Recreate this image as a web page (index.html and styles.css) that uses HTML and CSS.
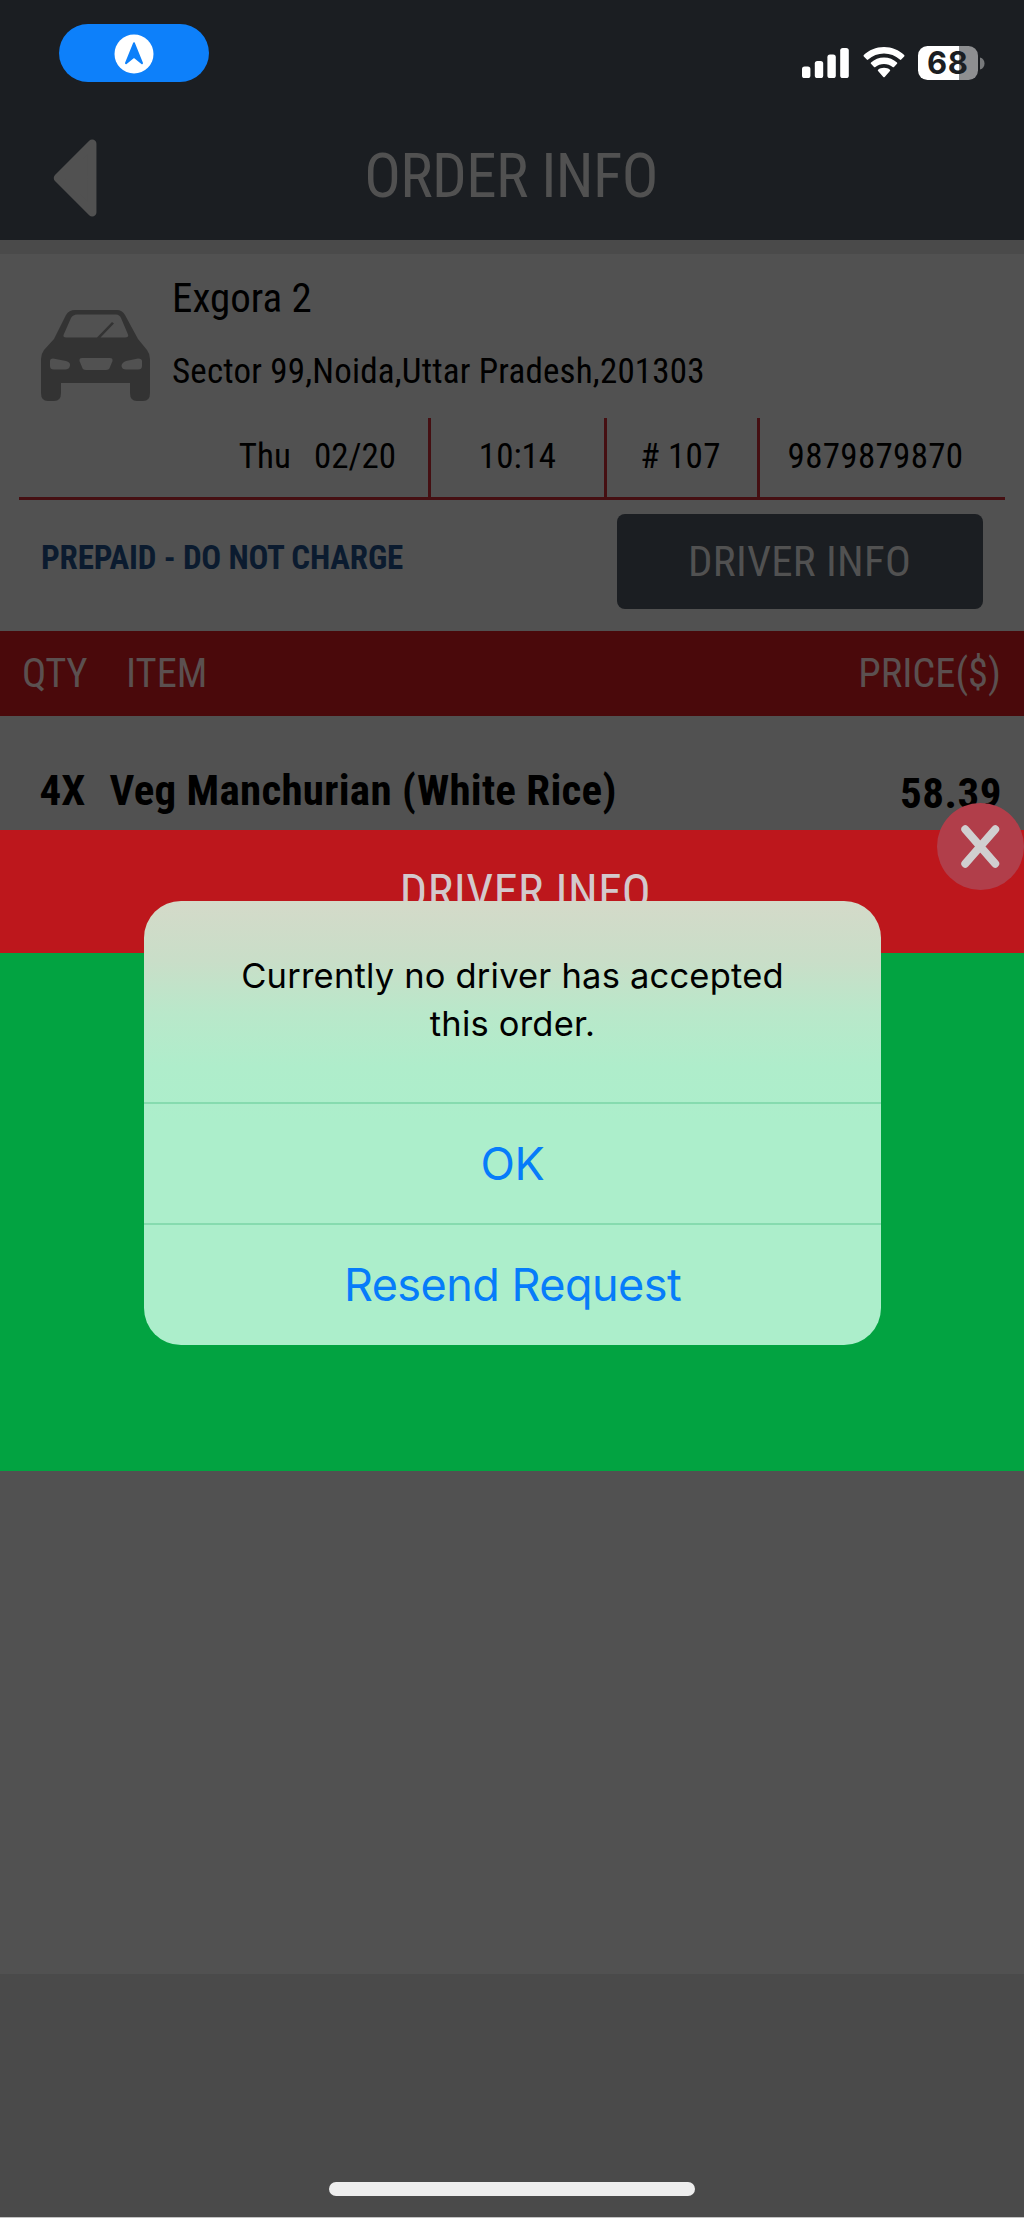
FILE: index.html
```html
<!DOCTYPE html>
<html lang="en">
<head>
<meta charset="utf-8">
<title>Order Info</title>
<link rel="stylesheet" href="styles.css">
</head>
<body>
<div class="screen">
  <header class="header">
    <div class="status">
      <div class="status-pill">
        <svg width="40" height="40" viewBox="0 0 40 40"><circle cx="20" cy="20" r="19.5" fill="#fff"/><path d="M20 9.3 28 29.2 20 22.8 12 29.2Z" fill="#0d80fa" stroke="#0d80fa" stroke-width="2" stroke-linejoin="round"/></svg>
      </div>
      <div class="status-icons">
        <svg width="48" height="30" viewBox="0 0 48 30" fill="#fff"><rect x="0" y="18.5" width="8.4" height="11.5" rx="2.6"/><rect x="12.8" y="13" width="8.4" height="17" rx="2.6"/><rect x="25.4" y="6.6" width="8.4" height="23.4" rx="2.6"/><rect x="38.2" y="0" width="8.6" height="30" rx="2.6"/></svg>
        <svg class="wifi" width="42" height="31" viewBox="0 0 42 31" fill="#fff"><path d="M21 0C29 0 36 3 41.200 8Q41.800 8.700 41.200 9.400L38.200 12.600Q37.500 13.200 36.800 12.600C32.500 8.700 27 6.600 21 6.600S9.500 8.700 5.200 12.600Q4.500 13.200 3.800 12.600L.8 9.400Q.2 8.700.8 8C6 3 13 0 21 0Z"/><path d="M21 10.400C26 10.400 30.500 12.300 34 15.400Q34.700 16.100 34 16.800L31 19.900Q30.300 20.500 29.600 19.900C27.200 17.900 24.300 16.900 21 16.900S14.800 17.900 12.400 19.900Q11.700 20.500 11 19.900L8 16.800Q7.300 16.100 8 15.400C11.500 12.300 16 10.400 21 10.400Z"/><path d="M21 20.800C23.500 20.800 25.300 21.500 26.900 22.700Q27.600 23.300 26.900 24L21.700 30Q21 30.700 20.300 30L15.100 24Q14.400 23.300 15.100 22.700C16.700 21.500 18.500 20.800 21 20.800Z"/></svg>
        <div class="battery"><span>68</span></div>
        <svg class="nub" width="5" height="13" viewBox="0 0 5 13"><path d="M0 0.500C3 1.300 4.500 3.500 4.500 6.500S3 11.700 0 12.500Z" fill="#77797b"/></svg>
      </div>
    </div>
    <div class="nav">
      <svg class="back" width="46" height="80" viewBox="0 0 46 80"><path d="M6 40 40.200 5.800V74.200Z" fill="#515151" stroke="#515151" stroke-width="8.500" stroke-linejoin="round"/></svg>
      <h1>ORDER INFO</h1>
    </div>
  </header>
  <section class="order">
    <div class="customer">
      <svg class="car" width="109" height="91" viewBox="0 0 109 91"><path fill="#333" fill-rule="evenodd" d="M34 0H76Q81 0 84 5L97 29 106 40Q109 44 109 49V83Q109 91 102 91H96Q89 91 89 83V73H20V83Q20 91 13 91H7Q0 91 0 83V49Q0 44 3 40L13 29 25 5Q28 0 34 0ZM36 4.500Q32 4.500 30 8L22.500 25Q22 27.500 25 27.500H56L71 12 73 13.500 59.500 27.500H84Q88 27.500 87 24.500L80 8Q78.500 4.500 75 4.500ZM12 48.500Q9 48.500 9 51V56Q9 59.500 13 59.500H24Q28.500 59.500 29 55.500 29.500 52 25 51ZM41 48H69Q72 48 71.500 51L69 57Q68.500 60 65 60H45Q41.500 60 41 57L38.500 51Q38 48 41 48ZM97 48.500Q101 48.500 101 51V56Q101 59.500 97 59.500H85Q81 59.500 80.500 56 80.500 53 85 51Z"/></svg>
      <div class="who">
        <p class="name">Exgora 2</p>
        <p class="address">Sector 99,Noida,Uttar Pradesh,201303</p>
      </div>
    </div>
    <div class="facts">
      <div class="fact fact-date"><span>Thu</span><span>02/20</span></div>
      <div class="fact fact-time">10:14</div>
      <div class="fact fact-number"># 107</div>
      <div class="fact fact-phone">9879879870</div>
    </div>
    <div class="payment">
      <p>PREPAID - DO NOT CHARGE</p>
      <button class="driver-button" type="button">DRIVER INFO</button>
    </div>
  </section>
  <div class="table-head"><span class="col-qty">QTY</span><span class="col-item">ITEM</span><span class="col-price">PRICE($)</span></div>
  <div class="item"><span class="item-qty">4X</span><span class="item-name">Veg Manchurian (White Rice)</span><span class="item-price">58.39</span></div>
  <footer class="footer"><div class="home-bar"></div></footer>

  <div class="sheet">
    <h2>DRIVER INFO</h2>
    <div class="sheet-body"></div>
    <button class="close" type="button" aria-label="Close"><svg width="87" height="87" viewBox="0 0 87 87"><path d="M28.300 26.300 58.200 60.700M58.200 26.300 28.300 60.700" stroke="#d0cfd0" stroke-width="8" stroke-linecap="round"/></svg></button>
  </div>
  <div class="alert" role="alertdialog">
    <p>Currently no driver has accepted<br>this order.</p>
    <button type="button" class="ok">OK</button>
    <button type="button" class="resend">Resend Request</button>
  </div>
</div>
</body>
</html>
```
FILE: styles.css
```css
* { box-sizing: border-box; margin: 0; padding: 0; }
body { background: #515151; }
button { border: 0; background: none; display: block; font: inherit; color: inherit; }
svg { display: block; flex: none; }

.screen {
  position: relative;
  display: flex;
  flex-direction: column;
  width: 1024px;
  height: 2218px;
  overflow: hidden;
  background: #515151;
  border-bottom: 1px solid #c4c4c4;
  font-family: "Roboto Condensed", Roboto, sans-serif;
  font-stretch: 75%;
  color: #000;
}

/* Header */
.header { height: 254px; background: #1b1e22; border-bottom: 14px solid #4a4a4a; flex: none; }
.status { display: flex; justify-content: space-between; height: 113px; padding: 24px 39px 0 59px; }
.status-pill { display: flex; justify-content: center; width: 150px; height: 58px; padding-top: 9.500px; border-radius: 29px; background: #0d80fa; }
.status-icons { display: flex; align-items: flex-start; padding-top: 24px; }
.wifi { margin: -1px 13px 0 12.500px; }
.battery {
  width: 60.500px; height: 34px; margin-top: -2px; border-radius: 9.500px;
  background: linear-gradient(90deg, #fff 41px, #8e8f91 41px);
  color: #1b1e22; font: 700 31px/34px Inter, sans-serif; letter-spacing: .5px; text-align: center;
}
.nub { margin: 8.500px 0 0 2px; }
.nav { position: relative; height: 127px; }
.nav h1 { padding-right: 2px; font-size: 61px; font-weight: 400; line-height: 127px; letter-spacing: -.6px; text-align: center; color: #515151; }
.back { position: absolute; left: 52px; top: 25px; }

/* Order summary */
.order { height: 377px; flex: none; }
.customer { display: flex; height: 164px; padding-left: 41px; }
.car { margin-top: 56px; }
.who { padding: 20px 0 0 22px; }
.name { font-size: 41px; line-height: 48px; }
.address { margin-top: 26px; font-size: 35px; line-height: 48px; letter-spacing: .19px; }
.facts { display: flex; height: 82px; margin: 0 19px; border-bottom: 3px solid #450f12; font-size: 35px; line-height: 78px; }
.fact { border-right: 3px solid #450f12; text-align: center; }
.fact:last-child { border-right: 0; }
.fact-date { display: flex; justify-content: flex-end; gap: 23px; width: 412px; padding-right: 32px; }
.fact-time { width: 176px; }
.fact-number { width: 153px; padding-right: 3px; letter-spacing: .3px; }
.fact-phone { flex: 1; padding-right: 14px; letter-spacing: .3px; }
.payment { display: flex; justify-content: space-between; align-items: flex-start; padding: 13.500px 41px 0; }
.payment p { font-size: 33px; font-weight: 700; line-height: 88px; letter-spacing: -.16px; color: #0b1b2f; }
.driver-button { width: 366px; height: 95.500px; padding-right: 1px; border-radius: 8px; background: #1b1e22; color: #515151; font-size: 43px; letter-spacing: .25px; line-height: 95px; }

/* Items */
.table-head { display: flex; flex: none; height: 84.500px; padding: 0 23px 0 22px; background: #4a090b; color: #5b5050; font-size: 40.500px; line-height: 84px; }
.col-qty { width: 104px; letter-spacing: -.3px; }
.col-price { margin-left: auto; }
.item { display: flex; flex: none; height: 257px; padding: 49.500px 22px 0 39.500px; font-size: 43px; font-weight: 700; line-height: 50px; }
.item-qty { width: 70px; }
.item-name { letter-spacing: .26px; }
.item-price { margin: 3px 0 0 auto; letter-spacing: .5px; }
.footer { display: flex; justify-content: center; align-items: flex-end; height: 243px; margin-top: auto; padding-bottom: 21.500px; background: #4a4a4a; flex: none; }
.home-bar { width: 366px; height: 14px; border-radius: 7px; background: #eee; }

/* Driver sheet, over the order */
.sheet { position: absolute; left: 0; top: 830px; width: 100%; }
.sheet h2 { height: 123px; padding-left: 27px; background: #bd171c; color: #d3c9cc; font-size: 48px; font-weight: 400; line-height: 123px; letter-spacing: .5px; text-align: center; }
.sheet-body { height: 518px; background: #02a341; }
.close { position: absolute; left: 937px; top: -27px; width: 87px; height: 87px; border-radius: 50%; background: #b13e4a; }

/* Alert, over the sheet */
.alert {
  position: absolute; left: 144px; top: 900.500px; width: 737px; height: 444px;
  border-radius: 37px; overflow: hidden; text-align: center;
  background: linear-gradient(#d4dac9 0, #c9dec8 60px, #b9e8ca 112px, #afedcb 165px, #aceecb 220px, #aceecb 100%);
  font-family: Inter, sans-serif; font-stretch: 100%;
}
.alert p { height: 201.500px; padding-top: 51px; font-size: 34.500px; line-height: 48px; letter-spacing: .2px; }
.alert button { width: 100%; height: 121px; border-top: 2px solid #86dbaf; color: #067cfa; font-size: 45px; line-height: 118px; }
.alert .ok { letter-spacing: -.3px; }
.alert .resend { letter-spacing: -.54px; }
```
